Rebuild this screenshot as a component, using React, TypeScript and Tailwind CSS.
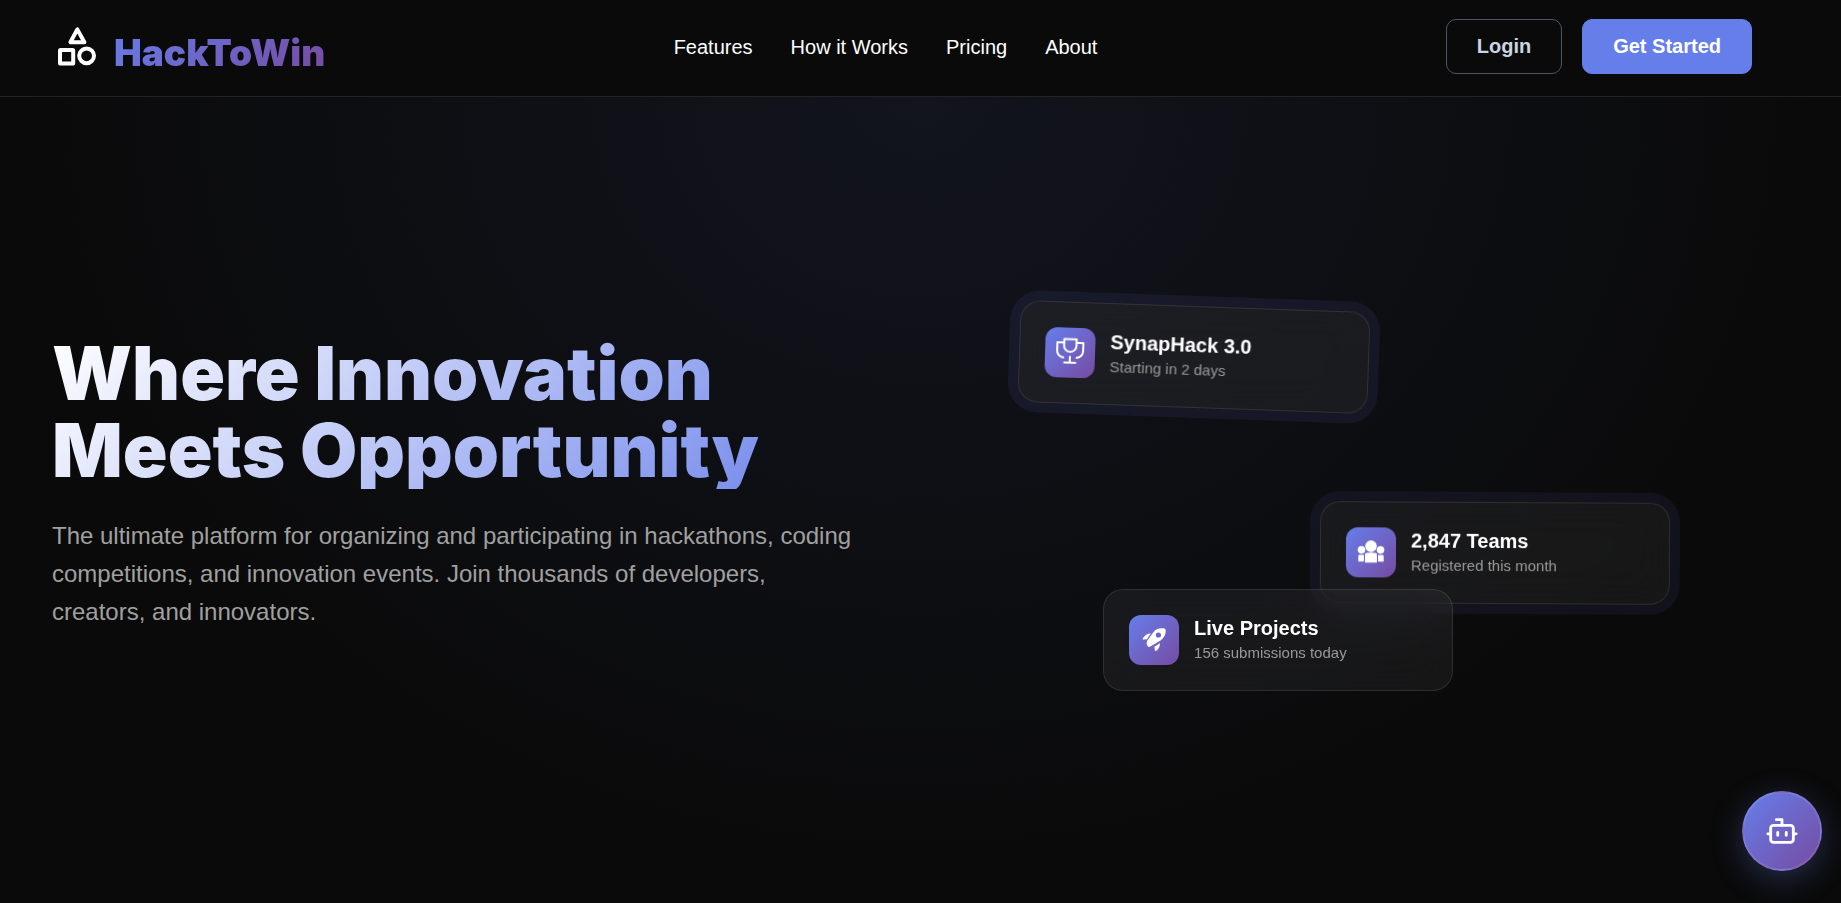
import React from "react";
import { Bot } from "lucide-react";

const navLinks = ["Features", "How it Works", "Pricing", "About"];

function LogoMark() {
  return (
    <svg width="48" height="48" viewBox="0 0 48 48" fill="none" stroke="white" strokeWidth="4" strokeLinejoin="round" aria-hidden="true">
      <path d="M23.3 6.4 L16.4 19.2 H30.4 Z" />
      <rect x="6" y="27.1" width="13.2" height="13.4" rx="0.6" />
      <circle cx="32.6" cy="32.8" r="7.4" />
    </svg>
  );
}

function TrophyIcon() {
  return (
    <svg width="30" height="30" viewBox="0 0 30 30" fill="none" stroke="white" strokeWidth="2" strokeLinejoin="round" strokeLinecap="round" aria-hidden="true">
      <path d="M8.8 1.6 H21.2 V8 A6.2 6.2 0 0 1 8.8 8 Z" />
      <path d="M8.8 5 H2 V13 Q2 18.6 8.4 20" />
      <path d="M21.2 5 H28 V13 Q28 18.6 21.6 20" />
      <path d="M15 19 V25 M9.4 25 H20.6" />
    </svg>
  );
}

function TeamIcon() {
  return (
    <svg width="28" height="28" viewBox="0 0 30 30" fill="white" aria-hidden="true">
      <circle cx="15" cy="8.4" r="6.2" />
      <circle cx="4.8" cy="12.4" r="4.1" />
      <circle cx="25.2" cy="12.4" r="4.1" />
      <path d="M8.6 26 V17.2 Q8.6 16 10.4 15.6 Q15 14.8 19.6 15.6 Q21.4 16 21.4 17.2 V26 Z" />
      <path d="M1.4 25 V19 Q1.4 18 2.8 17.8 Q5 17.3 7.4 17.8 V25 Z" />
      <path d="M28.6 25 V19 Q28.6 18 27.2 17.8 Q25 17.3 22.6 17.8 V25 Z" />
    </svg>
  );
}

function RocketIcon() {
  return (
    <svg width="30" height="30" viewBox="0 0 30 30" fill="white" aria-hidden="true">
      <path
        fillRule="evenodd"
        d="M25.4 3.6 C20.4 2.8 16.8 4 14.2 7.4 L8.4 15.4 C7.2 17.2 7.4 19.6 8.8 21.2 C9.4 22 10.2 22.2 11.2 21.6 L21.6 15.4 C25.6 12.4 27 8.8 26.6 4.8 C26.5 4.1 26.1 3.7 25.4 3.6 Z M19.4 7.4 A2.6 2.6 0 1 1 19.4 12.6 A2.6 2.6 0 1 1 19.4 7.4 Z"
      />
      <path d="M12 8.6 C8.6 8.4 6 9.8 3.8 13.4 C3.4 14.2 3.8 14.6 4.6 14.5 L8 14.2 C9 12.2 10.4 10.4 12 8.6 Z" />
      <path d="M20.8 18 C21 21.4 20 24 17.4 25.8 C16.6 26.3 16 26 15.8 25.2 L15.4 21.6 C17.4 20.6 19.2 19.4 20.8 18 Z" />
    </svg>
  );
}

type FloatingCardProps = { icon: React.ReactNode; title: string; note: string; className: string };

function FloatingCard({ icon, title, note, className }: FloatingCardProps) {
  return (
    <article
      className={`absolute flex w-[350px] items-center gap-[15px] rounded-[20px] border border-white/10 bg-white/5 p-[25px] backdrop-blur-[20px] ${className}`}
    >
      <div className="flex size-[50px] shrink-0 items-center justify-center rounded-xl bg-[linear-gradient(135deg,#667eea,#764ba2)]">
        {icon}
      </div>
      <div>
        <h3 className="text-[20px] leading-[26px] font-bold text-white">{title}</h3>
        <p className="text-[15px] leading-6 text-[#999999]">{note}</p>
      </div>
    </article>
  );
}

export default function App() {
  return (
    <div className="flex min-h-screen flex-col bg-[#0a0a0a] font-['Liberation_Sans',Arial,sans-serif] text-white">
      <header className="flex items-center justify-between border-b border-white/10 pt-[19px] pr-[89px] pb-[22px] pl-[54px]">
        <a href="#" className="flex items-center gap-3">
          <LogoMark />
          <span className="bg-[linear-gradient(135deg,#667eea,#764ba2)] bg-clip-text pt-3 font-['Inter',sans-serif] text-[37px] leading-[42px] font-black text-transparent [font-optical-sizing:none]">
            HackToWin
          </span>
        </a>
        <nav className="flex items-center gap-[38px]">
          {navLinks.map((label) => (
            <a key={label} href="#" className="text-[20px] leading-[22px] font-medium text-white">
              {label}
            </a>
          ))}
        </nav>
        <div className="flex items-center gap-5">
          <button type="button" className="rounded-[10px] border border-[#4a5568] px-[30px] py-4 text-[20px] leading-[21px] font-bold text-[#cbd5e1]">
            Login
          </button>
          <button type="button" className="rounded-[10px] border border-[#667eea] bg-[#667eea] px-[30px] py-4 text-[20px] leading-[21px] font-bold text-white">
            Get Started
          </button>
        </div>
      </header>

      <main className="grid flex-1 grid-cols-2 items-center gap-16 bg-[radial-gradient(ellipse_at_top,rgba(102,126,234,0.09)_0%,transparent_70%)] px-[52px] pb-9">
        <section className="pt-[2px]">
          <h1 className="bg-[linear-gradient(135deg,#ffffff,#667eea)] bg-clip-text font-['Inter',sans-serif] text-[74px] leading-[77px] font-black text-transparent [font-optical-sizing:none]">
            Where Innovation
            <br />
            Meets Opportunity
          </h1>
          <p className="mt-7 max-w-[800px] text-[24px] leading-[38px] text-[#a0a0a0]">
            The ultimate platform for organizing and participating in hackathons, coding competitions, and innovation events. Join thousands of developers, creators, and innovators.
          </p>
        </section>
        <section className="relative h-[500px]">
          <FloatingCard
            icon={<TrophyIcon />}
            title="SynapHack 3.0"
            note="Starting in 2 days"
            className="top-[74px] left-[8%] rotate-2 shadow-[0_0_0_10px_rgba(102,110,234,0.09)]"
          />
          <FloatingCard
            icon={<TeamIcon />}
            title="2,847 Teams"
            note="Registered this month"
            className="top-[270px] right-[119px] rotate-[0.3deg] shadow-[0_0_0_10px_rgba(102,102,234,0.08)]"
          />
          <FloatingCard
            icon={<RocketIcon />}
            title="Live Projects"
            note="156 submissions today"
            className="top-[357px] left-[18%]"
          />
        </section>
      </main>

      <button
        type="button"
        aria-label="Open assistant"
        className="fixed right-[19px] bottom-8 flex size-20 items-center justify-center rounded-full border-2 border-white/10 bg-[linear-gradient(135deg,#667eea,#764ba2)] shadow-[0_8px_32px_rgba(102,126,234,0.3)]"
      >
        <Bot size={34} strokeWidth={2} />
      </button>
    </div>
  );
}
